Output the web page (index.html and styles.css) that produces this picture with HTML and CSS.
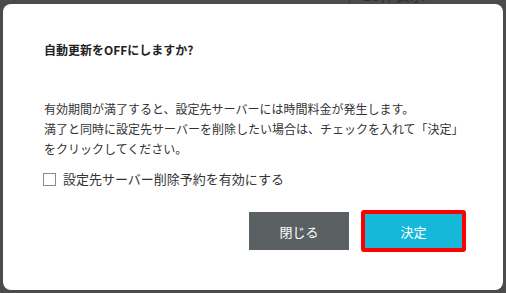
FILE: index.html
```html
<!DOCTYPE html>
<html lang="ja">
<head>
<meta charset="utf-8">
<title>自動更新をOFFにしますか?</title>
<link rel="stylesheet" href="styles.css">
</head>
<body>
<div class="bg-hint"><span class="bg-line"></span><span class="bg-text">10件表示</span></div>
<div class="modal">
  <h2 class="modal-title">自動更新をOFFにしますか?</h2>
  <p class="modal-body">有効期間が満了すると、設定先サーバーには時間料金が発生します。<br>満了と同時に設定先サーバーを削除したい場合は、チェックを入れて「決定」<br>をクリックしてください。</p>
  <label class="check-row"><span class="check-box"></span><span class="check-label">設定先サーバー削除予約を有効にする</span></label>
  <div class="modal-footer">
    <button class="btn btn-close">閉じる</button>
    <button class="btn btn-ok">決定</button>
  </div>
</div>
</body>
</html>
```
FILE: styles.css
```css
html, body {
  margin: 0;
  padding: 0;
}
body {
  width: 506px;
  height: 293px;
  overflow: hidden;
  background: #4b4b4b;
  font-family: "Noto Sans CJK JP", "Noto Sans", sans-serif;
  color: #333;
  position: relative;
}
.bg-hint {
  position: absolute;
  top: -14px;
  left: 349px;
  display: flex;
  align-items: flex-end;
  gap: 13px;
  height: 18px;
}
.bg-line {
  width: 1px;
  height: 18px;
  background: #3a3a3a;
}
.bg-text {
  font-size: 15px;
  line-height: 18px;
  color: #2e2e2e;
}
.modal {
  position: relative;
  margin: 4px 3px 3px 3px;
  width: 500px;
  height: 286px;
  box-sizing: border-box;
  background: #fff;
  border-radius: 8px;
  padding: 36px 37px 0 41px;
}
.modal-title {
  margin: 0;
  font-size: 12px;
  line-height: 20px;
  font-weight: bold;
  color: #222;
  white-space: nowrap;
}
.modal-body {
  margin: 39px 0 0 0;
  font-size: 12px;
  line-height: 20px;
  white-space: nowrap;
}
.check-row {
  margin-top: 10px;
  height: 20px;
  display: flex;
  align-items: center;
  gap: 7px;
}
.check-box {
  width: 13px;
  height: 13px;
  box-sizing: border-box;
  border: 1px solid #8a8a8a;
  background: #fff;
  margin-left: -1px;
}
.check-label {
  font-size: 13px;
  line-height: 20px;
  white-space: nowrap;
}
.modal-footer {
  margin-top: 21px;
  display: flex;
  justify-content: flex-end;
  align-items: center;
  gap: 12px;
}
.btn {
  font-family: "Noto Sans CJK JP", "Noto Sans", sans-serif;
  font-size: 13px;
  color: #fff;
  border: none;
  padding: 0;
  margin: 0;
  box-sizing: border-box;
}
.btn-close {
  width: 100px;
  height: 38px;
  background: #5b6163;
}
.btn-ok {
  width: 105px;
  height: 42px;
  background: #16b8d9;
  border: 4px solid #ff0000;
  border-radius: 3px;
}
```
